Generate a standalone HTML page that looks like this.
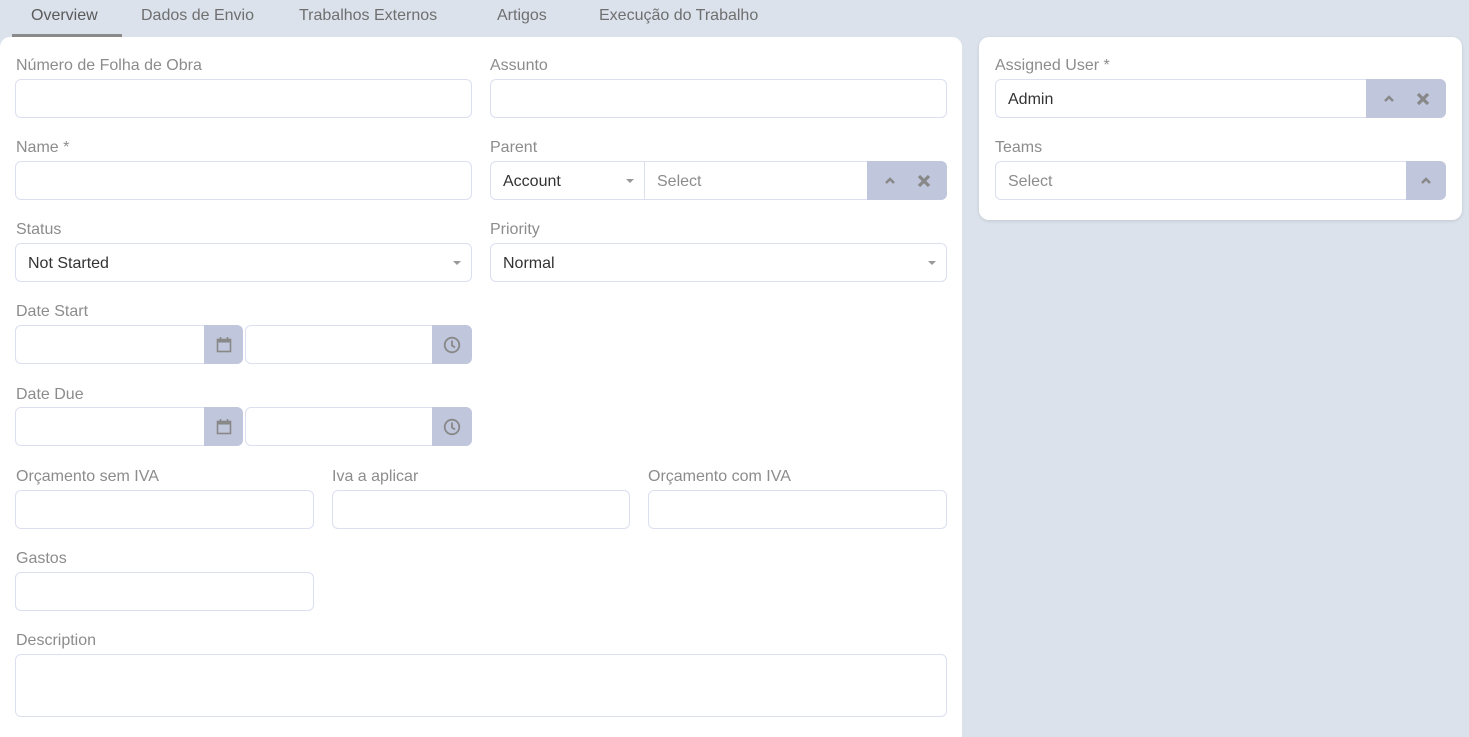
<!DOCTYPE html>
<html><head><meta charset="utf-8"><style>
*{box-sizing:border-box;margin:0;padding:0}
body{width:1469px;height:726px;overflow:hidden;background:#dbe2ec;font-family:"Liberation Sans",sans-serif;position:relative}
.a{position:absolute}
.tab{position:absolute;top:7px;font-size:16px;color:#6f6f6f}
.panel{position:absolute;background:#fff;border-radius:10px}
.lbl{position:absolute;font-size:16px;color:#8c8c8c;line-height:20px}
.in{position:absolute;height:39px;border:1px solid #dcdff0;border-radius:6px;background:#fff;font-size:16px;color:#333;line-height:39px;padding-left:12px}
.ph{color:#8c8c8c}
.btn{position:absolute;height:39px;background:#c0c6dc;display:flex;align-items:center;justify-content:center}
.caret{position:absolute;right:10px;top:17px;width:0;height:0;border-left:4px solid transparent;border-right:4px solid transparent;border-top:4px solid #999}
</style></head><body>
<div class="tab" style="left:31px;color:#5a5a5a">Overview</div>
<div class="tab" style="left:141px">Dados de Envio</div>
<div class="tab" style="left:299px">Trabalhos Externos</div>
<div class="tab" style="left:497px">Artigos</div>
<div class="tab" style="left:599px">Execução do Trabalho</div>
<div class="a" style="left:12px;top:34px;width:110px;height:3px;background:#8a8a8a"></div>

<div class="panel" style="left:0;top:37px;width:962px;height:700px;border-radius:10px 10px 0 0"></div>
<div class="panel" style="left:979px;top:37px;width:483px;height:183px;box-shadow:0 1px 3px rgba(0,0,0,.12)"></div>

<div class="lbl" style="left:16px;top:56px">Número de Folha de Obra</div>
<div class="in" style="left:15px;top:79px;width:457px"></div>
<div class="lbl" style="left:490px;top:56px">Assunto</div>
<div class="in" style="left:490px;top:79px;width:457px"></div>

<div class="lbl" style="left:16px;top:138px">Name *</div>
<div class="in" style="left:15px;top:161px;width:457px"></div>
<div class="lbl" style="left:490px;top:138px">Parent</div>
<div class="in" style="left:490px;top:161px;width:155px;border-radius:6px 0 0 6px">Account<div class="caret"></div></div>
<div class="in ph" style="left:644px;top:161px;width:224px;border-radius:0;border-left:1px solid #dcdff0">Select</div>
<div class="btn" style="left:867px;top:161px;width:80px;border-radius:0 6px 6px 0;justify-content:space-around;padding:0 6px">
<svg width="12" height="10" viewBox="0 0 12 10"><path d="M2 7L6 3L10 7" stroke="#888" stroke-width="2.5" fill="none"/></svg>
<svg width="14" height="14" viewBox="0 0 14 14"><path d="M2 2L12 12M12 2L2 12" stroke="#888" stroke-width="3.2"/></svg></div>

<div class="lbl" style="left:16px;top:220px">Status</div>
<div class="in" style="left:15px;top:243px;width:457px">Not Started<div class="caret"></div></div>
<div class="lbl" style="left:490px;top:220px">Priority</div>
<div class="in" style="left:490px;top:243px;width:457px">Normal<div class="caret"></div></div>

<div class="lbl" style="left:16px;top:302px">Date Start</div>
<div class="in" style="left:15px;top:325px;width:192px;border-radius:6px 0 0 6px"></div>
<div class="btn" style="left:204px;top:325px;width:39px;border-radius:0 6px 6px 0"><svg width="16" height="17" viewBox="0 0 16 17"><rect x="1.5" y="3.5" width="13" height="12" fill="none" stroke="#888" stroke-width="1.6"/><rect x="1.5" y="3.5" width="13" height="3" fill="#888"/><path d="M4.5 1v3M11.5 1v3" stroke="#888" stroke-width="1.6"/></svg></div>
<div class="in" style="left:245px;top:325px;width:190px;border-radius:6px 0 0 6px"></div>
<div class="btn" style="left:432px;top:325px;width:40px;border-radius:0 6px 6px 0"><svg width="18" height="18" viewBox="0 0 18 18"><circle cx="9" cy="9" r="7.3" fill="none" stroke="#888" stroke-width="1.8"/><path d="M9 4.5V9.5L12 11.5" stroke="#888" stroke-width="1.8" fill="none"/></svg></div>

<div class="lbl" style="left:16px;top:385px">Date Due</div>
<div class="in" style="left:15px;top:407px;width:192px;border-radius:6px 0 0 6px"></div>
<div class="btn" style="left:204px;top:407px;width:39px;border-radius:0 6px 6px 0"><svg width="16" height="17" viewBox="0 0 16 17"><rect x="1.5" y="3.5" width="13" height="12" fill="none" stroke="#888" stroke-width="1.6"/><rect x="1.5" y="3.5" width="13" height="3" fill="#888"/><path d="M4.5 1v3M11.5 1v3" stroke="#888" stroke-width="1.6"/></svg></div>
<div class="in" style="left:245px;top:407px;width:190px;border-radius:6px 0 0 6px"></div>
<div class="btn" style="left:432px;top:407px;width:40px;border-radius:0 6px 6px 0"><svg width="18" height="18" viewBox="0 0 18 18"><circle cx="9" cy="9" r="7.3" fill="none" stroke="#888" stroke-width="1.8"/><path d="M9 4.5V9.5L12 11.5" stroke="#888" stroke-width="1.8" fill="none"/></svg></div>

<div class="lbl" style="left:16px;top:467px">Orçamento sem IVA</div>
<div class="in" style="left:15px;top:490px;width:299px"></div>
<div class="lbl" style="left:332px;top:467px">Iva a aplicar</div>
<div class="in" style="left:332px;top:490px;width:298px"></div>
<div class="lbl" style="left:648px;top:467px">Orçamento com IVA</div>
<div class="in" style="left:648px;top:490px;width:299px"></div>

<div class="lbl" style="left:16px;top:549px">Gastos</div>
<div class="in" style="left:15px;top:572px;width:299px"></div>

<div class="lbl" style="left:16px;top:631px">Description</div>
<div class="in" style="left:15px;top:654px;width:932px;height:63px"></div>

<div class="lbl" style="left:995px;top:56px">Assigned User *</div>
<div class="in" style="left:995px;top:79px;width:375px;border-radius:6px 0 0 6px">Admin</div>
<div class="btn" style="left:1366px;top:79px;width:80px;border-radius:0 6px 6px 0;justify-content:space-around;padding:0 6px">
<svg width="12" height="10" viewBox="0 0 12 10"><path d="M2 7L6 3L10 7" stroke="#888" stroke-width="2.5" fill="none"/></svg>
<svg width="14" height="14" viewBox="0 0 14 14"><path d="M2 2L12 12M12 2L2 12" stroke="#888" stroke-width="3.2"/></svg></div>

<div class="lbl" style="left:995px;top:138px">Teams</div>
<div class="in ph" style="left:995px;top:161px;width:414px;border-radius:6px 0 0 6px">Select</div>
<div class="btn" style="left:1406px;top:161px;width:40px;border-radius:0 6px 6px 0"><svg width="12" height="10" viewBox="0 0 12 10"><path d="M2 7L6 3L10 7" stroke="#888" stroke-width="2.5" fill="none"/></svg></div>
</body></html>
